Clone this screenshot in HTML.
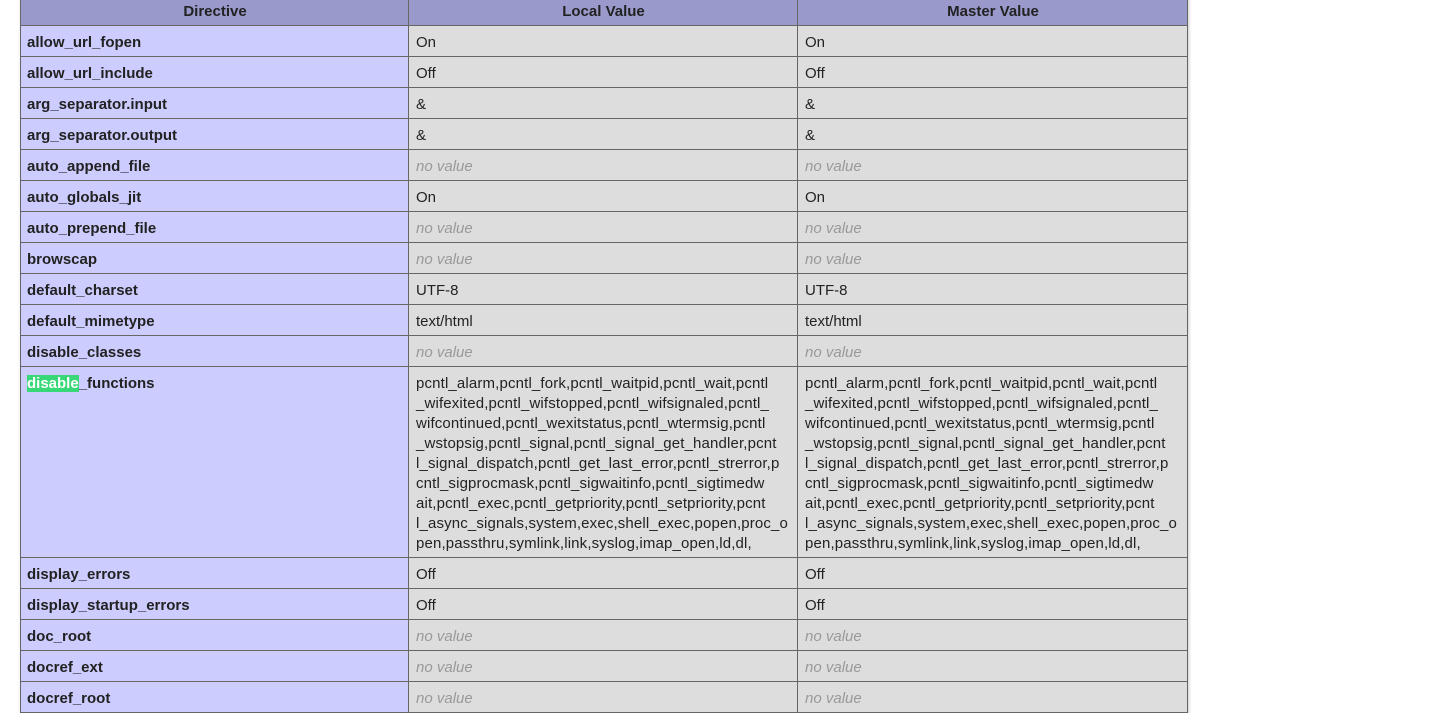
<!DOCTYPE html>
<html><head><meta charset="utf-8"><style>
body{margin:0;background:#fff;width:1450px;height:702px;overflow:hidden;font-family:"Liberation Sans",sans-serif;font-size:15px;color:#222;}
table{position:absolute;left:20px;top:-6px;border-collapse:collapse;table-layout:fixed;width:1168px;box-shadow:1px 2px 3px #ccc;}
td,th{border:1px solid #666;padding:7px 6px 3px 7px;line-height:20px;vertical-align:top;overflow:hidden;white-space:nowrap;text-align:left;}
th{background:#9999cc;text-align:center;font-weight:bold;}
.e{background:#ccccff;font-weight:bold;padding-left:6px;}
.v{background:#ddd;}
.n{color:#999;font-style:italic;}
.l div{font-size:15px;letter-spacing:0.15px;white-space:nowrap;}
.hl{background:#38d878;color:#fff;}
</style></head><body>
<table>
<col style="width:388px"><col style="width:389px"><col style="width:390px">
<tr><th>Directive</th><th>Local Value</th><th>Master Value</th></tr>
<tr><td class="e">allow_url_fopen</td><td class="v">On</td><td class="v">On</td></tr>
<tr><td class="e">allow_url_include</td><td class="v">Off</td><td class="v">Off</td></tr>
<tr><td class="e">arg_separator.input</td><td class="v">&amp;</td><td class="v">&amp;</td></tr>
<tr><td class="e">arg_separator.output</td><td class="v">&amp;</td><td class="v">&amp;</td></tr>
<tr><td class="e">auto_append_file</td><td class="v n">no value</td><td class="v n">no value</td></tr>
<tr><td class="e">auto_globals_jit</td><td class="v">On</td><td class="v">On</td></tr>
<tr><td class="e">auto_prepend_file</td><td class="v n">no value</td><td class="v n">no value</td></tr>
<tr><td class="e">browscap</td><td class="v n">no value</td><td class="v n">no value</td></tr>
<tr><td class="e">default_charset</td><td class="v">UTF-8</td><td class="v">UTF-8</td></tr>
<tr><td class="e">default_mimetype</td><td class="v">text/html</td><td class="v">text/html</td></tr>
<tr><td class="e">disable_classes</td><td class="v n">no value</td><td class="v n">no value</td></tr>
<tr><td class="e"><span class="hl">disable</span>_functions</td>
<td class="v l"><div>pcntl_alarm,pcntl_fork,pcntl_waitpid,pcntl_wait,pcntl</div><div>_wifexited,pcntl_wifstopped,pcntl_wifsignaled,pcntl_</div><div>wifcontinued,pcntl_wexitstatus,pcntl_wtermsig,pcntl</div><div>_wstopsig,pcntl_signal,pcntl_signal_get_handler,pcnt</div><div>l_signal_dispatch,pcntl_get_last_error,pcntl_strerror,p</div><div>cntl_sigprocmask,pcntl_sigwaitinfo,pcntl_sigtimedw</div><div>ait,pcntl_exec,pcntl_getpriority,pcntl_setpriority,pcnt</div><div>l_async_signals,system,exec,shell_exec,popen,proc_o</div><div>pen,passthru,symlink,link,syslog,imap_open,ld,dl,</div></td>
<td class="v l"><div>pcntl_alarm,pcntl_fork,pcntl_waitpid,pcntl_wait,pcntl</div><div>_wifexited,pcntl_wifstopped,pcntl_wifsignaled,pcntl_</div><div>wifcontinued,pcntl_wexitstatus,pcntl_wtermsig,pcntl</div><div>_wstopsig,pcntl_signal,pcntl_signal_get_handler,pcnt</div><div>l_signal_dispatch,pcntl_get_last_error,pcntl_strerror,p</div><div>cntl_sigprocmask,pcntl_sigwaitinfo,pcntl_sigtimedw</div><div>ait,pcntl_exec,pcntl_getpriority,pcntl_setpriority,pcnt</div><div>l_async_signals,system,exec,shell_exec,popen,proc_o</div><div>pen,passthru,symlink,link,syslog,imap_open,ld,dl,</div></td></tr>
<tr><td class="e">display_errors</td><td class="v">Off</td><td class="v">Off</td></tr>
<tr><td class="e">display_startup_errors</td><td class="v">Off</td><td class="v">Off</td></tr>
<tr><td class="e">doc_root</td><td class="v n">no value</td><td class="v n">no value</td></tr>
<tr><td class="e">docref_ext</td><td class="v n">no value</td><td class="v n">no value</td></tr>
<tr><td class="e">docref_root</td><td class="v n">no value</td><td class="v n">no value</td></tr>
</table>
</body></html>
